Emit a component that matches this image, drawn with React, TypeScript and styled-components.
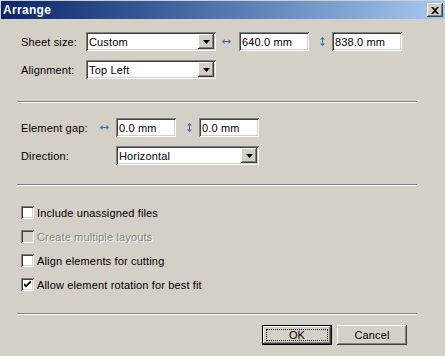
import React from "react";
import styled, { createGlobalStyle } from "styled-components";

const GlobalStyle = createGlobalStyle`
  html, body {
    margin: 0;
    padding: 0;
    background: #d4d0c8;
  }
  body {
    font-family: "Liberation Sans", Arial, sans-serif;
    font-size: 11px;
    letter-spacing: 0.15px;
    color: #000;
  }
`;

const raised = `
  box-shadow: inset -1px -1px #404040, inset 1px 1px #ffffff,
    inset -2px -2px #808080, inset 2px 2px #d4d0c8;
`;

const sunken = `
  box-shadow: inset 1px 1px #808080, inset -1px -1px #ffffff,
    inset 2px 2px #404040, inset -2px -2px #d4d0c8;
`;

const Window = styled.div`
  width: 445px;
  height: 356px;
  box-sizing: border-box;
  padding: 1px 0 0 1px;
  background: #d4d0c8;
  display: flex;
  flex-direction: column;
`;

const TitleBar = styled.div`
  height: 18px;
  flex: none;
  display: flex;
  align-items: center;
  justify-content: space-between;
  padding: 0 2px 0 2px;
  background: linear-gradient(90deg, #0a246a 0%, #3a5e9a 35%, #a6caf0 100%);
`;

const Title = styled.span`
  color: #fff;
  font-weight: bold;
  font-size: 12px;
  letter-spacing: 0.3px;
`;

const CloseButton = styled.div`
  width: 16px;
  height: 14px;
  box-sizing: border-box;
  background: #d4d0c8;
  ${raised}
  display: flex;
  align-items: center;
  justify-content: center;
`;

const Content = styled.div`
  display: flex;
  flex-direction: column;
  padding: 0 28px 0 15px;
`;

const Section = styled.div<{ $top: number; $gap: number }>`
  display: flex;
  flex-direction: column;
  gap: ${(p) => p.$gap}px;
  margin-top: ${(p) => p.$top}px;
`;

const Row = styled.div`
  display: flex;
  align-items: center;
  height: 19px;
`;

const Label = styled.span<{ $w: number }>`
  width: ${(p) => p.$w}px;
  margin-left: 5px;
  flex: none;
  white-space: nowrap;
`;

const Combo = styled.div<{ $w: number }>`
  width: ${(p) => p.$w}px;
  height: 19px;
  box-sizing: border-box;
  background: #fff;
  ${sunken}
  display: flex;
  align-items: center;
  justify-content: space-between;
  padding: 2px 2px 2px 3px;
  flex: none;
`;

const DropButton = styled.div`
  width: 16px;
  height: 15px;
  box-sizing: border-box;
  background: #d4d0c8;
  ${raised}
  display: flex;
  align-items: center;
  justify-content: center;
`;

const Field = styled.div<{ $w: number }>`
  width: ${(p) => p.$w}px;
  height: 19px;
  box-sizing: border-box;
  background: #fff;
  ${sunken}
  display: flex;
  align-items: center;
  padding: 0 3px;
  flex: none;
`;

const ArrowSlot = styled.div<{ $w: number; $pad: number }>`
  width: ${(p) => p.$w}px;
  padding-left: ${(p) => p.$pad}px;
  box-sizing: border-box;
  flex: none;
  display: flex;
  align-items: center;
`;

const Separator = styled.div<{ $top: number }>`
  margin-top: ${(p) => p.$top}px;
  width: 400px;
  margin-left: 1px;
  height: 0;
  border-top: 1px solid #808080;
  border-bottom: 1px solid #ffffff;
`;

const CheckRow = styled.div<{ $disabled?: boolean }>`
  display: flex;
  align-items: center;
  height: 13px;
  margin-left: 5px;
  gap: 3px;
  color: ${(p) => (p.$disabled ? "#808080" : "#000")};
  text-shadow: ${(p) => (p.$disabled ? "1px 1px #ffffff" : "none")};
`;

const Box = styled.div<{ $disabled?: boolean }>`
  width: 13px;
  height: 13px;
  box-sizing: border-box;
  background: ${(p) => (p.$disabled ? "#d4d0c8" : "#fff")};
  ${sunken}
  display: flex;
  align-items: center;
  justify-content: center;
  flex: none;
`;

const ButtonRow = styled.div`
  display: flex;
  justify-content: flex-end;
  gap: 5px;
  margin-top: 10px;
  padding-right: 10px;
`;

const PushButton = styled.div<{ $default?: boolean }>`
  width: 70px;
  height: 20px;
  box-sizing: border-box;
  background: #d4d0c8;
  display: flex;
  align-items: center;
  justify-content: center;
  position: relative;
  ${(p) =>
    p.$default
      ? `box-shadow: inset 0 0 0 1px #000, inset -2px -2px #404040, inset 2px 2px #ffffff,
    inset -3px -3px #808080;`
      : raised}
`;

const FocusRect = styled.span`
  position: absolute;
  left: 4px;
  right: 4px;
  top: 4px;
  bottom: 4px;
  border: 1px dotted #000;
`;

const HArrow = () => (
  <svg width="9" height="5" viewBox="0 0 9 5">
    <path d="M0 2.5 L2.5 0 V5 Z M9 2.5 L6.5 0 V5 Z" fill="#3a6ea5" />
    <rect x="2" y="2" width="5" height="1" fill="#3a6ea5" />
  </svg>
);

const VArrow = () => (
  <svg width="5" height="9" viewBox="0 0 5 9">
    <path d="M2.5 0 L0 2.5 H5 Z M2.5 9 L0 6.5 H5 Z" fill="#3a6ea5" />
    <rect x="2" y="2" width="1" height="5" fill="#3a6ea5" />
  </svg>
);

const Triangle = () => (
  <svg width="7" height="4" viewBox="0 0 7 4">
    <path d="M0 0 H7 L3.5 4 Z" fill="#000" />
  </svg>
);

const Check = () => (
  <svg width="7" height="7" viewBox="0 0 7 7">
    <path d="M0 2 L2 4 L7 -1 V1.5 L2 6.5 L0 4.5 Z" fill="#000" />
  </svg>
);

const CloseX = () => (
  <svg width="8" height="7" viewBox="0 0 8 7">
    <path
      d="M0 0 H2 L4 2 L6 0 H8 L5 3.5 L8 7 H6 L4 5 L2 7 H0 L3 3.5 Z"
      fill="#000"
    />
  </svg>
);

const ComboBox: React.FC<{ w: number; value: string }> = ({ w, value }) => (
  <Combo $w={w}>
    <span>{value}</span>
    <DropButton>
      <Triangle />
    </DropButton>
  </Combo>
);

const App: React.FC = () => {
  return (
    <>
      <GlobalStyle />
      <Window>
        <TitleBar>
          <Title>Arrange</Title>
          <CloseButton>
            <CloseX />
          </CloseButton>
        </TitleBar>
        <Content>
          <Section $top={13} $gap={9}>
            <Row>
              <Label $w={65}>Sheet size:</Label>
              <ComboBox w={130} value="Custom" />
              <ArrowSlot $w={23} $pad={6}>
                <HArrow />
              </ArrowSlot>
              <Field $w={70}>640.0 mm</Field>
              <ArrowSlot $w={23} $pad={11}>
                <VArrow />
              </ArrowSlot>
              <Field $w={70}>838.0 mm</Field>
            </Row>
            <Row>
              <Label $w={65}>Alignment:</Label>
              <ComboBox w={130} value="Top Left" />
            </Row>
          </Section>
          <Separator $top={22} />
          <Section $top={15} $gap={9}>
            <Row>
              <Label $w={79}>Element gap:</Label>
              <ArrowSlot $w={16} $pad={0}>
                <HArrow />
              </ArrowSlot>
              <Field $w={60}>0.0 mm</Field>
              <ArrowSlot $w={23} $pad={11}>
                <VArrow />
              </ArrowSlot>
              <Field $w={60}>0.0 mm</Field>
            </Row>
            <Row>
              <Label $w={95}>Direction:</Label>
              <ComboBox w={143} value="Horizontal" />
            </Row>
          </Section>
          <Separator $top={19} />
          <Section $top={20} $gap={11}>
            <CheckRow>
              <Box />
              <span>Include unassigned files</span>
            </CheckRow>
            <CheckRow $disabled>
              <Box $disabled />
              <span>Create multiple layouts</span>
            </CheckRow>
            <CheckRow>
              <Box />
              <span>Align elements for cutting</span>
            </CheckRow>
            <CheckRow>
              <Box>
                <Check />
              </Box>
              <span>Allow element rotation for best fit</span>
            </CheckRow>
          </Section>
          <Separator $top={22} />
          <ButtonRow>
            <PushButton $default>
              <FocusRect />
              OK
            </PushButton>
            <PushButton>Cancel</PushButton>
          </ButtonRow>
        </Content>
      </Window>
    </>
  );
};

export default App;
